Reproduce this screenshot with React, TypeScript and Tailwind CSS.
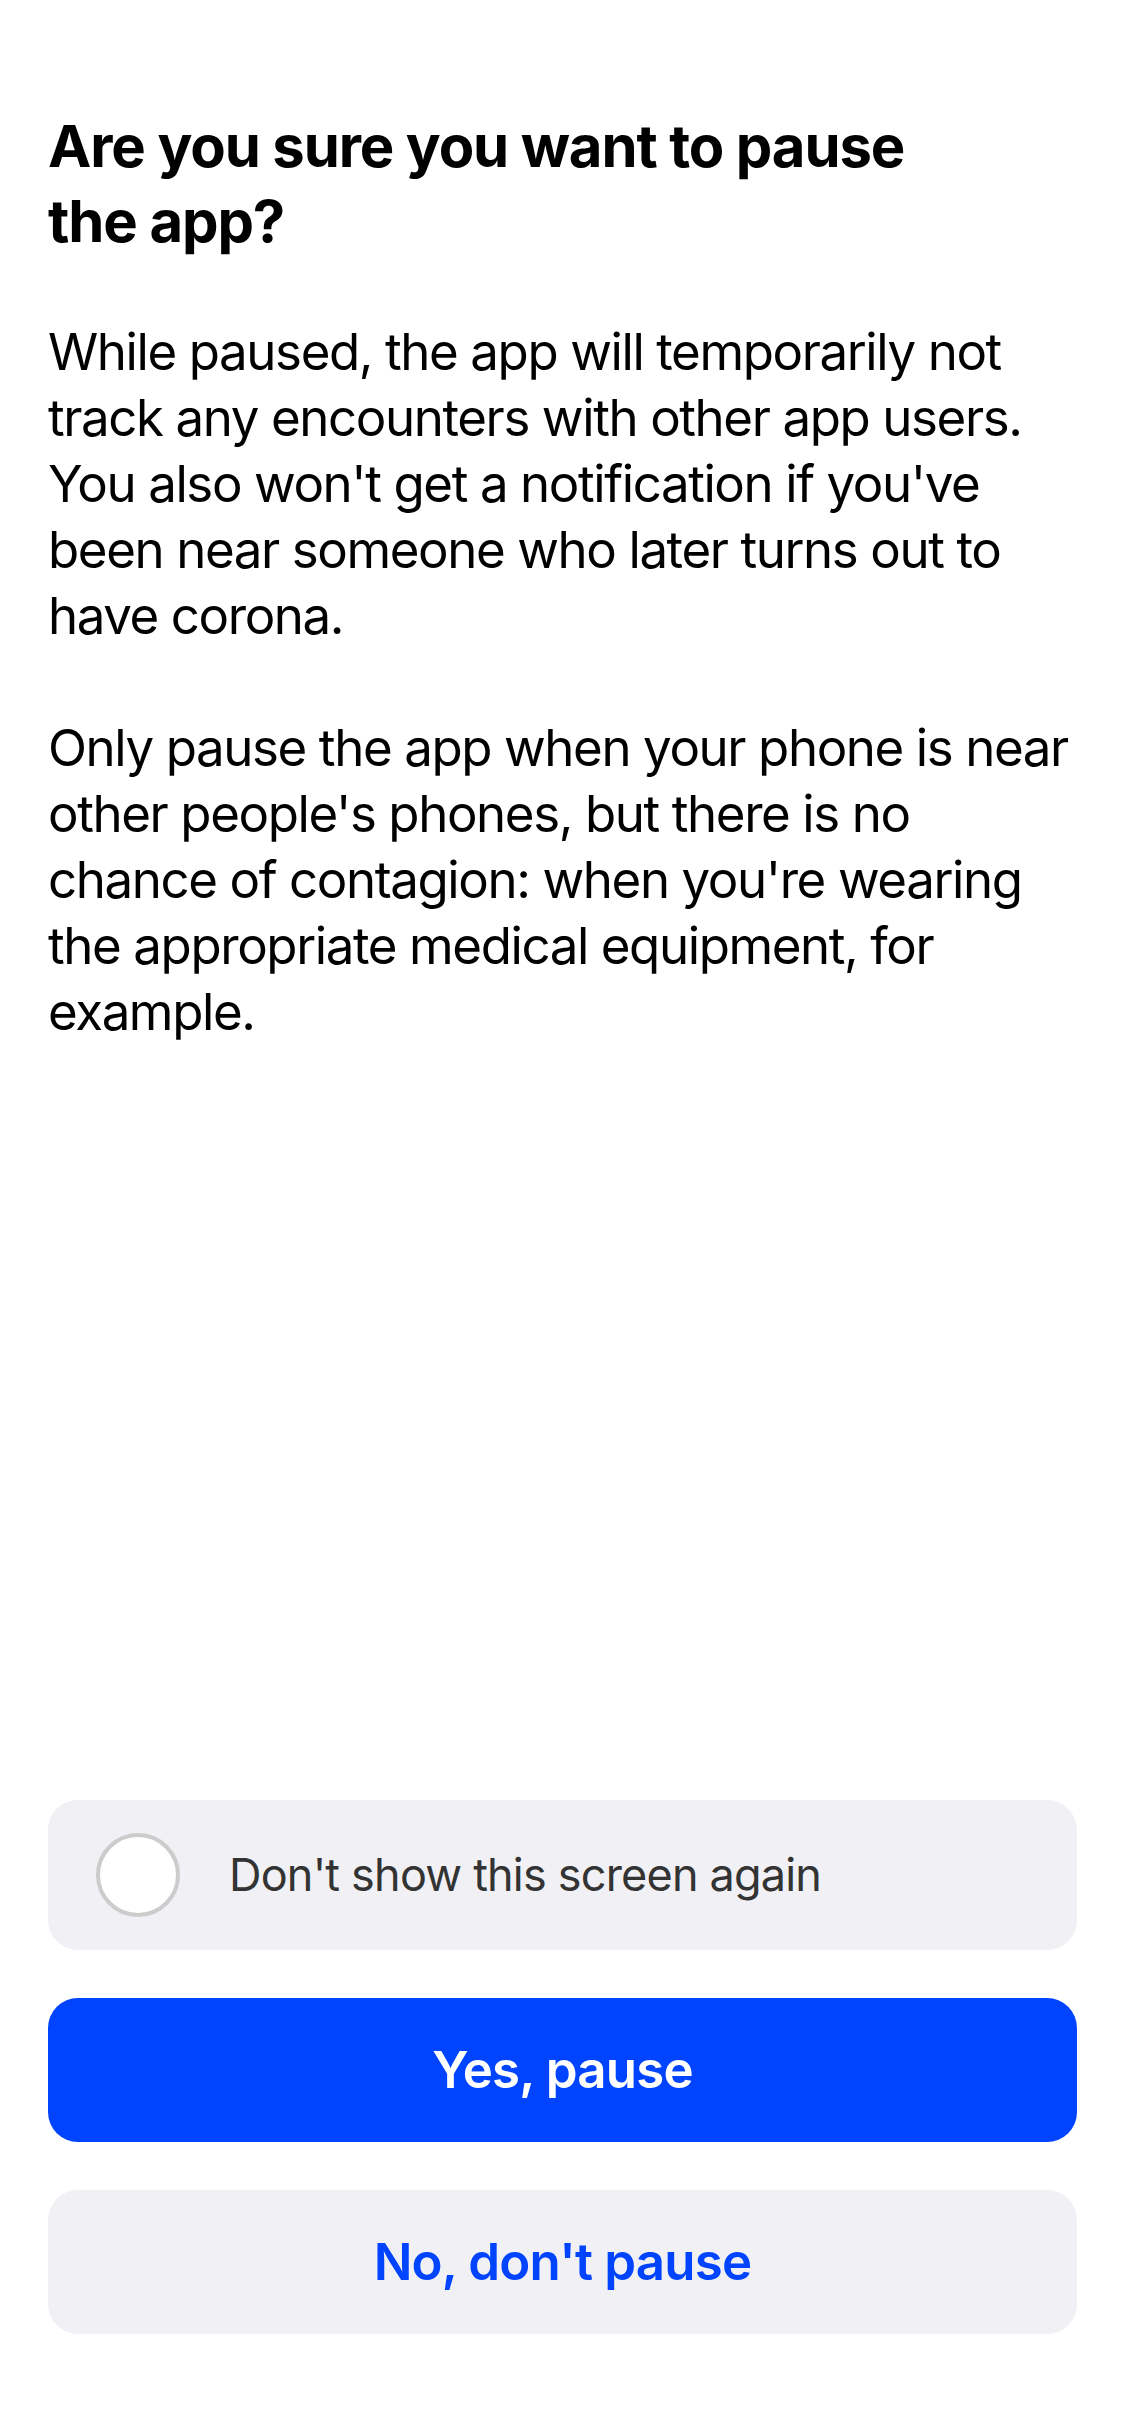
export default function App() {
  return (
    <div
      className="flex h-[2436px] w-[1125px] flex-col bg-white px-12 text-black"
      style={{ fontFamily: "Inter, 'Noto Sans', sans-serif" }}
    >
      <div className="pt-[109px]">
        <h1 className="text-[58px] font-bold leading-[75px] tracking-[-1.1px]">
          Are you sure you want to pause
          <br />
          the app?
        </h1>
        <p className="mt-[60px] text-[51px] leading-[66px] tracking-[-1.4px]">
          While paused, the app will temporarily not track any encounters with other app users.
          You also won't get a notification if you've been near someone who later turns out to
          have corona.
        </p>
        <p className="mt-[66px] text-[51px] leading-[66px] tracking-[-1.4px]">
          Only pause the app when your phone is near other people's phones, but there is no
          chance of contagion: when you're wearing the appropriate medical equipment, for
          example.
        </p>
      </div>

      <div className="mt-auto flex flex-col gap-12 pb-[102px]">
        <button className="flex h-[150px] items-center gap-[49px] rounded-[30px] bg-[#f0f0f5] px-[48px] text-left">
          <span className="h-[84px] w-[84px] shrink-0 rounded-full border-[4px] border-[#cccccc] bg-white" />
          <span className="text-[45px] tracking-[-0.8px] text-[#333333]">
            Don't show this screen again
          </span>
        </button>
        <button className="h-[144px] rounded-[30px] bg-[#0044ff] text-[51px] font-semibold tracking-[-0.8px] text-white">
          Yes, pause
        </button>
        <button className="h-[144px] rounded-[30px] bg-[#f0f0f5] text-[51px] font-semibold tracking-[-0.8px] text-[#0044ff]">
          No, don't pause
        </button>
      </div>
    </div>
  );
}
